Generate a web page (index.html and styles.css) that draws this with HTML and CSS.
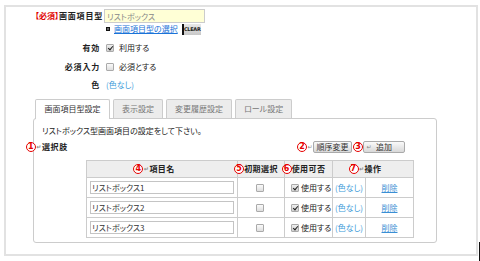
FILE: index.html
```html
<!DOCTYPE html>
<html lang="ja">
<head>
    <meta charset="UTF-8">
    <meta name="viewport" content="width=device-width, initial-scale=1.0">
    <title>画面項目型設定</title>
    <link rel="stylesheet" href="styles.css">
</head>
<body>
    <div class="frame">
        <div class="field field-type">
            <div class="field-label"><span class="required">【必須】</span>画面項目型</div>
            <div class="field-value"><input type="text" class="type-input" value="リストボックス" readonly></div>
        </div>
        <div class="field field-pick">
            <div></div>
            <div class="field-value">
                <span class="bullet"></span>
                <a href="#" class="link">画面項目型の選択</a>
                <span class="clear-btn">CLEAR</span>
            </div>
        </div>
        <div class="field field-opt first">
            <div class="field-label">有効</div>
            <div class="field-value"><input type="checkbox" class="cb" checked>利用する</div>
        </div>
        <div class="field field-opt tall">
            <div class="field-label">必須入力</div>
            <div class="field-value"><input type="checkbox" class="cb">必須とする</div>
        </div>
        <div class="field field-opt">
            <div class="field-label">色</div>
            <div class="field-value"><span class="color-none">(色なし)</span></div>
        </div>

        <div class="tabs">
            <div class="tab active">画面項目型設定</div>
            <div class="tab">表示設定</div>
            <div class="tab">変更履歴設定</div>
            <div class="tab">ロール設定</div>
        </div>
        <div class="panel">
            <p class="panel-text">リストボックス型画面項目の設定をして下さい。</p>
            <div class="choice-head">
                <span class="note heading"><span class="mark"><span class="num">1</span><span class="ret">↵</span></span>選択肢</span>
                <div class="tools">
                    <span class="note"><span class="mark"><span class="num">2</span><span class="ret">↵</span></span><button class="btn btn-order">順序変更</button></span>
                    <span class="note"><span class="mark"><span class="num">3</span></span><button class="btn btn-add"><span class="ret in-btn">↵</span>追加</button></span>
                </div>
            </div>
            <table class="choices">
                <colgroup>
                    <col class="c-name"><col class="c-init"><col class="c-use"><col class="c-color"><col class="c-del">
                </colgroup>
                <thead>
                    <tr>
                        <th><span class="note"><span class="mark"><span class="num">4</span><span class="ret">↵</span></span>項目名</span></th>
                        <th><span class="note"><span class="mark"><span class="num">5</span></span>初期選択</span></th>
                        <th><span class="note"><span class="mark"><span class="num">6</span></span>使用可否</span></th>
                        <th colspan="2"><span class="note"><span class="mark"><span class="num">7</span><span class="ret">↵</span></span>操作</span></th>
                    </tr>
                </thead>
                <tbody>
                    <tr>
                        <td><input type="text" class="name-input" value="リストボックス1"></td>
                        <td class="center"><input type="checkbox" class="cb"></td>
                        <td class="use"><input type="checkbox" class="cb" checked>使用する</td>
                        <td class="color"><span class="color-none">(色なし)</span></td>
                        <td class="center"><a href="#" class="del">削除</a></td>
                    </tr>
                    <tr>
                        <td><input type="text" class="name-input" value="リストボックス2"></td>
                        <td class="center"><input type="checkbox" class="cb"></td>
                        <td class="use"><input type="checkbox" class="cb" checked>使用する</td>
                        <td class="color"><span class="color-none">(色なし)</span></td>
                        <td class="center"><a href="#" class="del">削除</a></td>
                    </tr>
                    <tr>
                        <td><input type="text" class="name-input" value="リストボックス3"></td>
                        <td class="center"><input type="checkbox" class="cb"></td>
                        <td class="use"><input type="checkbox" class="cb" checked>使用する</td>
                        <td class="color"><span class="color-none">(色なし)</span></td>
                        <td class="center"><a href="#" class="del">削除</a></td>
                    </tr>
                </tbody>
            </table>
        </div>
    </div>
    <div class="edge"></div>
</body>
</html>
```
FILE: styles.css
```css
body {
    margin: 0;
    font-family: "Noto Sans CJK JP", "DejaVu Sans", sans-serif;
    font-size: 8px;
    line-height: 12px;
    color: #222;
    font-feature-settings: "palt";
}
.frame {
    margin: 5px 2px 0 4px;
    height: 251px;
    box-sizing: border-box;
    border: 2px solid #e2e2e2;
    padding-top: 2px;
}
.field {
    display: grid;
    grid-template-columns: 97px 1fr;
    align-items: center;
}
.field-label {
    text-align: right;
    font-weight: bold;
    letter-spacing: 0.8px;
}
.required {
    color: #e00000;
    letter-spacing: 0;
}
.field-value {
    display: flex;
    align-items: center;
    gap: 3px;
}
.field-type {
    height: 14px;
}
.type-input {
    width: 101px;
    height: 14px;
    box-sizing: border-box;
    margin: 0 0 0 1px;
    padding: 0 2px;
    border: 1px solid #ccc;
    background: #ffffd6;
    color: #888;
    font: inherit;
    outline: none;
}
.field-pick {
    height: 12px;
}
.field-pick .field-value {
    padding-left: 3px;
}
.bullet {
    width: 2px;
    height: 2px;
    border: 1.5px solid #111;
    background: #666;
}
.link {
    color: #1a73d8;
    margin-left: 1px;
}
.clear-btn {
    margin-left: 1px;
    width: 17px;
    height: 11px;
    border-left: 2px solid #111;
    background: linear-gradient(#e8e8e8, #c8c8c8);
    font-size: 5px;
    line-height: 11px;
    font-weight: bold;
    text-align: center;
    letter-spacing: -0.3px;
    font-family: "DejaVu Sans", sans-serif;
}
.field-opt {
    height: 18px;
}
.field-opt.first {
    margin-top: 4px;
}
.field-opt.tall {
    height: 19px;
}
.field-opt .field-label {
    padding-right: 3px;
}
.field-opt .field-value {
    padding-left: 3px;
}
.color-none {
    color: #3a9ad9;
}
.cb {
    appearance: none;
    width: 8px;
    height: 8px;
    margin: 0 2px 0 0;
    box-sizing: border-box;
    border: 1px solid #aaa;
    border-radius: 1px;
    background: linear-gradient(#fafafa, #dedede);
    position: relative;
    vertical-align: middle;
}
.cb:checked {
    background: linear-gradient(#eee, #d0d0d0);
}
.cb:checked::after {
    content: "";
    position: absolute;
    left: 1.5px;
    top: -0.5px;
    width: 2px;
    height: 4px;
    border: solid #222;
    border-width: 0 1.5px 1.5px 0;
    transform: rotate(40deg);
}
.tabs {
    display: flex;
    align-items: flex-start;
    gap: 3px;
    margin: 5px 0 0 29px;
    height: 20px;
    position: relative;
    z-index: 1;
}
.tab {
    height: 19px;
    box-sizing: border-box;
    padding: 0 8px;
    border: 1px solid #ccc;
    border-bottom: none;
    border-radius: 2px 2px 0 0;
    background: #ececec;
    color: #777;
    line-height: 18px;
}
.tab.active {
    height: 20px;
    background: #fff;
    color: #333;
    padding: 0 8.5px;
}
.panel {
    margin: -1px 39px 0 27px;
    border: 1px solid #ccc;
    border-radius: 3px;
    padding: 6px 0 4px 8px;
}
.panel-text {
    margin: 0;
}
.choice-head {
    display: flex;
    justify-content: space-between;
    align-items: center;
    margin-top: 4px;
    height: 12px;
    padding-right: 31px;
}
.note {
    position: relative;
}
.mark {
    position: absolute;
    right: 100%;
    top: 50%;
    transform: translateY(-50%);
    display: flex;
    align-items: center;
    white-space: nowrap;
}
.num {
    width: 8px;
    height: 8px;
    border: 1.4px solid #e60000;
    border-radius: 50%;
    color: #e60000;
    font-family: "DejaVu Sans", sans-serif;
    font-size: 8px;
    font-weight: bold;
    line-height: 8px;
    text-align: center;
    background: #fff;
}
.ret {
    color: #888;
    font-family: "DejaVu Sans", sans-serif;
    font-size: 6px;
    width: 6px;
    text-align: center;
}
.heading {
    font-weight: bold;
    letter-spacing: 0.6px;
}
.tools {
    display: flex;
    gap: 11px;
}
.btn {
    height: 12px;
    box-sizing: border-box;
    margin: 0;
    padding: 0;
    border: 1px solid #aaa;
    border-radius: 2px;
    background: linear-gradient(#fafafa, #d8d8d8);
    font: inherit;
    line-height: 10px;
    color: #333;
    position: relative;
}
.btn-order {
    width: 39px;
}
.btn-add {
    width: 42px;
}
.in-btn {
    position: absolute;
    left: 2px;
    top: 0;
}
.choices {
    margin: 7px 0 0 44px;
    width: 327px;
    border-collapse: collapse;
    table-layout: fixed;
}
.c-name { width: 151px; }
.c-init { width: 47px; }
.c-use { width: 48px; }
.c-color { width: 33px; }
.c-del { width: 48px; }
.choices th, .choices td {
    border: 1px solid #ccc;
    padding: 0;
    white-space: nowrap;
}
.choices th {
    height: 16px;
    background: #eee;
    font-weight: bold;
    letter-spacing: 0.4px;
}
.choices td {
    height: 19px;
}
.name-input {
    display: block;
    width: 144px;
    height: 13px;
    box-sizing: border-box;
    margin: 0 0 0 3px;
    padding: 0 1px;
    border: 1px solid #c4c4c4;
    font: inherit;
    color: #333;
}
.center {
    text-align: center;
}
.use {
    padding-left: 6px !important;
}
.color {
    padding-left: 2px !important;
}
.del {
    color: #3a8fd4;
}
.edge {
    position: absolute;
    left: 479px;
    top: 242px;
    width: 1px;
    height: 19px;
    background: #111;
}
```
